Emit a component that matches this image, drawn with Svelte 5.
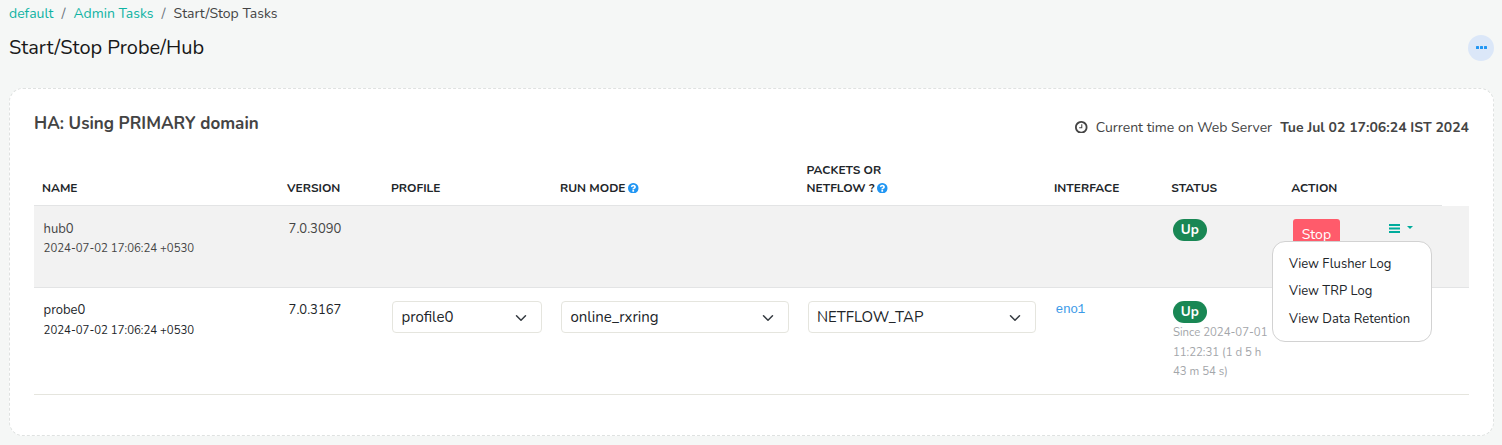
<script>
  const columns = ['NAME', 'VERSION', 'PROFILE', 'RUN MODE', 'PACKETS OR NETFLOW ?', 'INTERFACE', 'STATUS', 'ACTION', ''];
  const logs = ['View Flusher Log', 'View TRP Log', 'View Data Retention'];
</script>

{#snippet help()}
  <svg class="help" viewBox="0 0 1536 1536" aria-hidden="true">
    <path d="M896 1248v-192q0-14-9-23t-23-9h-192q-14 0-23 9t-9 23v192q0 14 9 23t23 9h192q14 0 23-9t9-23zm256-672q0-88-55.500-163t-138.500-116-170-41q-243 0-371 213-15 24 8 42l132 100q7 6 19 6 16 0 25-12 53-68 86-92 34-24 86-24 48 0 85.500 26t37.500 59q0 38-20 61t-68 45q-63 28-115.500 86.500t-52.500 125.500v36q0 14 9 23t23 9h192q14 0 23-9t9-23q0-19 21.500-49.500t54.500-49.500q32-18 49-28.500t46-35 44.500-48 28-60.500 12.500-81zm384 192q0 209-103 385.500t-279.500 279.500-385.500 103-385.500-103-279.500-279.500-103-385.500 103-385.500 279.500-279.500 385.500-103 385.500 103 279.500 279.500 103 385.500z" />
  </svg>
{/snippet}

{#snippet select(value)}
  <div class="select">
    <span>{value}</span>
    <svg viewBox="0 0 16 16" aria-hidden="true"><path d="m2 5 6 6 6-6" /></svg>
  </div>
{/snippet}

<div class="page">
  <nav>
    <a href="#default">default</a><i>/</i><a href="#admin">Admin Tasks</a><i>/</i><span>Start/Stop Tasks</span>
  </nav>
  <header>
    <h1>Start/Stop Probe/Hub</h1>
    <button class="more" aria-label="More"><b></b><b></b><b></b></button>
  </header>

  <main>
    <div class="top">
      <h2>HA: Using PRIMARY domain</h2>
      <div class="clock">
        <svg viewBox="0 0 1536 1536" aria-hidden="true">
          <path d="M896 416v448q0 14-9 23t-23 9h-320q-14 0-23-9t-9-23v-64q0-14 9-23t23-9h224v-352q0-14 9-23t23-9h64q14 0 23 9t9 23zm416 352q0-148-73-273t-198-198-273-73-273 73-198 198-73 273 73 273 198 198 273 73 273-73 198-198 73-273zm224 0q0 209-103 385.500t-279.500 279.500-385.500 103-385.500-103-279.500-279.500-103-385.500 103-385.500 279.500-279.500 385.500-103 385.500 103 279.500 279.500 103 385.500z" />
        </svg>
        <span>Current time on Web Server</span>
        <strong>Tue Jul 02 17:06:24 IST 2024</strong>
      </div>
    </div>

    <div class="row head">
      {#each columns as name, n}
        <div class="th" class:narrow={n === 4}><span>{name}{#if n === 3 || n === 4}&nbsp;{@render help()}{/if}</span></div>
      {/each}
    </div>

    <div class="row hub">
      <div>hub0<small>2024-07-02 17:06:24 +0530</small></div>
      <div>7.0.3090</div>
      <div></div>
      <div></div>
      <div></div>
      <div></div>
      <div><span class="badge">Up</span></div>
      <div><button class="stop">Stop</button></div>
      <div class="menu">
        <button class="toggle" aria-label="Logs">
          <svg class="bars" viewBox="0 0 11 9" aria-hidden="true"><path d="M0 0h11v2H0zM0 3.500h11v2H0zM0 7h11v2H0z" /></svg>
          <svg class="caret" viewBox="0 0 6 3" aria-hidden="true"><path d="M0 0h6L3 3z" /></svg>
        </button>
        <ul>
          {#each logs as log}<li>{log}</li>{/each}
        </ul>
      </div>
    </div>

    <div class="row probe">
      <div>probe0<small>2024-07-02 17:06:24 +0530</small></div>
      <div>7.0.3167</div>
      <div>{@render select('profile0')}</div>
      <div>{@render select('online_rxring')}</div>
      <div>{@render select('NETFLOW_TAP')}</div>
      <div><code>eno1</code></div>
      <div><span class="badge">Up</span><p>Since 2024-07-01 11:22:31 (1 d 5 h 43 m 54 s)</p></div>
      <div></div>
      <div></div>
    </div>
  </main>
</div>

<style>
  :global(body) { background: #f5f7f6; }
  .page, .page * { box-sizing: border-box; }
  .page {
    height: 445px;
    padding: 3px 8px 9px 9px;
    display: flex;
    flex-direction: column;
    overflow: hidden;
    font: 14px/21px Nunito, Lato, "Open Sans", sans-serif;
    color: #444;
  }
  nav { display: flex; height: 21px; }
  nav a { color: #0fb3a3; text-decoration: none; }
  nav i { font-style: normal; color: #6c757d; padding: 0 8px; }
  header { display: flex; justify-content: space-between; height: 64px; padding: 11px 0 0; }
  h1 { margin: 1px 0 0; font-size: 20px; line-height: 24px; font-weight: 400; color: #181818; }
  button { font: inherit; border: 0; padding: 0; }
  .more {
    width: 26px; height: 26px; border-radius: 50%; background: #dbe7f8;
    display: flex; align-items: center; justify-content: center; gap: 1px;
    padding-bottom: 1px;
  }
  .more b { width: 3px; height: 3px; border-radius: .5px; background: #2196f3; }
  main { flex: 1; background: #fff; border: 1px dashed #dfe2e1; border-radius: 14px; padding: 24px; }
  .top { display: flex; justify-content: space-between; height: 48px; }
  h2 { margin: 0; font-size: 17px; line-height: 21px; font-weight: 700; color: #444; }
  .clock { display: flex; align-items: center; height: 28px; color: #444; }
  .clock svg { width: 12.500px; height: 12.500px; fill: #444; margin-right: 8px; }
  .clock strong { font-weight: 700; margin-left: 8px; }
  .row {
    display: grid;
    grid-template-columns: 245px 104px 169px 246.600px 247.400px 117.300px 120px 95.700px 63px 27px;
    font-size: 13px;
    line-height: 19.500px;
  }
  .row > div { padding: 13px 9.600px 0; }
  .hub > div:nth-child(-n+2) { padding-top: 14px; }
  .head { height: 45px; }
  .row > .th {
    display: flex; align-items: flex-end;
    padding: 0 8px 8px; border-bottom: 1px solid #e3e4e5;
    font-size: 12px; line-height: 18px; font-weight: 700; color: #212529;
  }
  .narrow span { width: 86px; }
  .help { display: inline-block; width: 10.500px; height: 10.500px; fill: #2196f3; vertical-align: -1px; margin-left: -.4px; }
  .hub { height: 82px; background: #f2f2f2; border-bottom: 1px solid #e3e4e5; color: #444; }
  .probe { height: 107px; border-bottom: 1px solid #e5e5de; color: #212529; }
  small { display: block; font-size: 11.400px; line-height: 18px; }
  .hub small { line-height: 17px; }
  .badge {
    display: block; width: 34px; height: 22px; border-radius: 11px;
    background: #198754; color: #fff; font-size: 13.500px; line-height: 21px; font-weight: 700; text-align: center;
  }
  .stop { display: block; width: 47px; height: 31px; border-radius: 3px; background: #ff5b6b; color: #fff; font-size: 14px; }
  .menu { position: relative; }
  .toggle { display: flex; align-items: center; gap: 7px; background: none; height: 18px; }
  .bars { width: 11px; height: 9px; fill: #00ac9c; }
  .caret { width: 6px; height: 3px; fill: #00ac9c; margin-top: -2px; }
  ul {
    position: absolute; left: -107px; top: 35px; width: 160px; height: 101px;
    margin: 0; padding: 8.500px 0; list-style: none; z-index: 2;
    background: #fff; border: 1px solid #d2d2d2; border-radius: 13px;
  }
  li { padding: 4px 16px; line-height: 19.500px; color: #212529; }
  .select {
    display: flex; align-items: center; justify-content: space-between;
    height: 32px; padding: 1px 14px 0 8.400px; margin: 0 .2px 0 -.6px;
    border: 1px solid #e5e5de; border-radius: 4px; font-size: 15px; color: #212529;
  }
  .select svg { width: 12px; height: 12px; fill: none; stroke: #343a40; stroke-width: 2; stroke-linecap: round; stroke-linejoin: round; }
  code { display: block; font: 13px/17px "Liberation Mono", monospace; letter-spacing: -.5px; color: #3b9ae8; }
  p { margin: 0; width: 100px; font-size: 11.400px; line-height: 19.500px; color: #a3a6aa; }
</style>
